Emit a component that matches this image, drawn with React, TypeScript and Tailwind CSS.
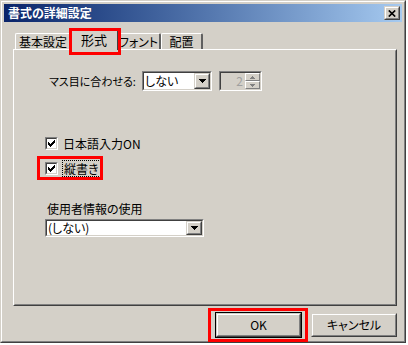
import React from 'react';

const raisedOuter = 'border border-t-[#d4d0c8] border-l-[#d4d0c8] border-r-[#404040] border-b-[#404040]';
const raisedInner = 'border border-t-white border-l-white border-r-[#808080] border-b-[#808080]';
const sunkenOuter = 'border border-t-[#808080] border-l-[#808080] border-r-white border-b-white';
const sunkenInner = 'border border-t-[#404040] border-l-[#404040] border-r-[#d4d0c8] border-b-[#d4d0c8]';

const DownArrow = () => (
  <svg width="7" height="4" viewBox="0 0 7 4" shapeRendering="crispEdges">
    <rect x="0" y="0" width="7" height="1" fill="#000" />
    <rect x="1" y="1" width="5" height="1" fill="#000" />
    <rect x="2" y="2" width="3" height="1" fill="#000" />
    <rect x="3" y="3" width="1" height="1" fill="#000" />
  </svg>
);

const DropButton = () => (
  <div className={`w-[16px] h-full shrink-0 ${raisedOuter}`}>
    <div className={`w-full h-full ${raisedInner} bg-[#d4d0c8] flex items-center justify-center`}>
      <DownArrow />
    </div>
  </div>
);

const Combo: React.FC<{ width: string; height: string; value: string }> = ({ width, height, value }) => (
  <div className={`${width} ${height} shrink-0 ${sunkenOuter}`}>
    <div className={`w-full h-full ${sunkenInner} bg-white flex items-stretch`}>
      <span className="flex-1 pl-[1px] text-[12px] leading-none whitespace-nowrap flex items-center">{value}</span>
      <DropButton />
    </div>
  </div>
);

const Check = () => (
  <svg width="7" height="7" viewBox="0 0 7 7" shapeRendering="crispEdges">
    {[2, 3, 4, 3, 2, 1, 0].map((y, x) => (
      <rect key={x} x={x} y={y} width="1" height="3" fill="#000" />
    ))}
  </svg>
);

const Checkbox = () => (
  <div className={`w-[13px] h-[13px] shrink-0 ${sunkenOuter}`}>
    <div className={`w-full h-full ${sunkenInner} bg-white flex items-center justify-center`}>
      <Check />
    </div>
  </div>
);

const SpinArrow: React.FC<{ up?: boolean }> = ({ up }) => (
  <svg width="5" height="3" viewBox="0 0 5 3" shapeRendering="crispEdges">
    {up ? (
      <>
        <rect x="2" y="0" width="1" height="1" fill="#808080" />
        <rect x="1" y="1" width="3" height="1" fill="#808080" />
        <rect x="0" y="2" width="5" height="1" fill="#808080" />
      </>
    ) : (
      <>
        <rect x="0" y="0" width="5" height="1" fill="#808080" />
        <rect x="1" y="1" width="3" height="1" fill="#808080" />
        <rect x="2" y="2" width="1" height="1" fill="#808080" />
      </>
    )}
  </svg>
);

const Tab: React.FC<{ label: string; width: string; active?: boolean }> = ({ label, width, active }) =>
  active ? (
    <div
      className={`${width} h-[20px] -mx-[2px] -mb-[1px] relative z-10 bg-[#d4d0c8] border-t border-l border-t-white border-l-white border-r-2 border-r-[#404040] rounded-t-[2px] flex items-center justify-center text-[13px] leading-none pb-[2px] whitespace-nowrap`}
    >
      {label}
    </div>
  ) : (
    <div
      className={`${width} h-[16px] bg-[#d4d0c8] border-t border-l border-t-white border-l-white border-r-2 border-r-[#606060] rounded-t-[2px] flex items-center justify-center text-[12px] leading-none whitespace-nowrap`}
    >
      {label}
    </div>
  );

export default function App() {
  return (
    <div className="relative w-[408px] h-[345px] bg-white text-black font-['Noto_Sans_CJK_JP','Noto_Sans',sans-serif] [font-feature-settings:'palt']">
      <div className={`w-[406px] h-[343px] bg-[#d4d0c8] ${raisedOuter}`}>
        <div className={`w-full h-full ${raisedInner} p-[2px] flex flex-col`}>
          {/* title bar */}
          <div className="h-[18px] shrink-0 flex items-center justify-between bg-gradient-to-r from-[#0a246a] to-[#a6caf0] pl-[4px] pr-[2px]">
            <span className="text-white text-[12px] font-bold leading-none">書式の詳細設定</span>
            <div className={`w-[16px] h-[14px] ${raisedOuter}`}>
              <div className={`w-full h-full ${raisedInner} bg-[#d4d0c8] flex items-center justify-center`}>
                <svg width="8" height="7" viewBox="0 0 8 7">
                  <path d="M0.8 0.5 L7.2 6.5 M7.2 0.5 L0.8 6.5" stroke="#000" strokeWidth="1.7" />
                </svg>
              </div>
            </div>
          </div>

          {/* tabs */}
          <div className="h-[27px] shrink-0 flex items-end pl-[11px]">
            <Tab label="基本設定" width="w-[57px]" />
            <Tab label="形式" width="w-[49px]" active />
            <Tab label="フォント" width="w-[44px]" />
            <Tab label="配置" width="w-[42px]" />
          </div>

          {/* panel */}
          <div className="ml-[9px] w-[384px] h-[257px] shrink-0 border border-t-white border-l-white border-r-[#404040] border-b-[#404040]">
            <div className="w-full h-full border border-t-[#d4d0c8] border-l-[#d4d0c8] border-r-[#808080] border-b-[#808080] pl-[30px] flex flex-col text-[12px]">
              <div className="mt-[20px] h-[20px] flex items-center">
                <span className="w-[93px] shrink-0 ml-[4px] text-[11px] leading-none whitespace-nowrap">マス目に合わせる:</span>
                <Combo width="w-[70px]" height="h-[20px]" value="しない" />
                <div className={`ml-[7px] w-[43px] h-[20px] shrink-0 ${sunkenOuter}`}>
                  <div className={`w-full h-full ${sunkenInner} bg-[#d4d0c8] flex items-stretch`}>
                    <span className="flex-1 text-right pr-[2px] text-[#a0a0a0] leading-none flex items-center justify-end">2</span>
                    <div className="w-[15px] flex flex-col">
                      <div className={`flex-1 ${raisedInner} flex items-center justify-center`}>
                        <SpinArrow up />
                      </div>
                      <div className={`flex-1 ${raisedInner} flex items-center justify-center`}>
                        <SpinArrow />
                      </div>
                    </div>
                  </div>
                </div>
              </div>

              <div className="mt-[44px] h-[17px] flex items-center">
                <Checkbox />
                <span className="ml-[5px] leading-none whitespace-nowrap">日本語入力ON</span>
              </div>
              <div className="mt-[8px] h-[17px] flex items-center">
                <Checkbox />
                <span className="ml-[4px] h-[17px] px-[1px] border border-dotted border-black leading-none flex items-center">縦書き</span>
              </div>

              <div className="mt-[24px] h-[16px] flex items-center ml-[2px] leading-none">使用者情報の使用</div>
              <div className="mt-[2px]">
                <Combo width="w-[159px]" height="h-[18px]" value="(しない)" />
              </div>
            </div>
          </div>

          {/* buttons */}
          <div className="mt-[6px] h-[26px] flex items-center justify-end gap-[9px] pr-[5px] text-[12px]">
            <div className="w-[87px] h-[26px] border border-black">
              <div className={`w-full h-full ${raisedOuter}`}>
                <div className={`w-full h-full ${raisedInner} flex items-center justify-center leading-none`}>OK</div>
              </div>
            </div>
            <div className={`w-[86px] h-[24px] ${raisedOuter}`}>
              <div className={`w-full h-full ${raisedInner} flex items-center justify-center leading-none`}>キャンセル</div>
            </div>
          </div>
        </div>
      </div>

      {/* red highlight boxes */}
      <div className="absolute left-[69px] top-[28px] w-[52px] h-[27px] border-[3px] border-[#ff0000] z-20" />
      <div className="absolute left-[37px] top-[156px] w-[66px] h-[24px] border-[3px] border-[#ff0000] z-20" />
      <div className="absolute left-[208px] top-[308px] w-[100px] h-[34px] border-[3px] border-[#ff0000] z-20" />
    </div>
  );
}
